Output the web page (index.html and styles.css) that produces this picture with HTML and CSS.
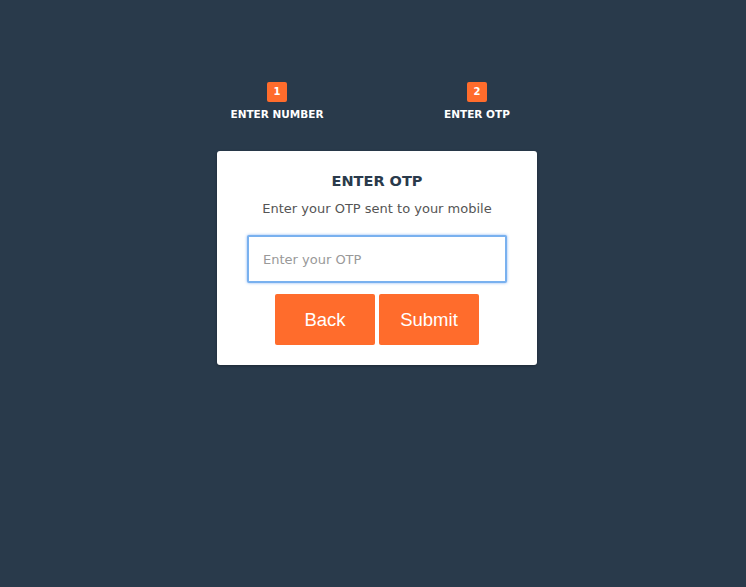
FILE: index.html
```html
<!DOCTYPE html>
<html>
<head>
<meta charset="utf-8">
<link rel="stylesheet" href="styles.css">
</head>
<body>
<div class="page">
  <div class="steps">
    <div class="step">
      <span class="badge">1</span>
      <span class="step-label">ENTER NUMBER</span>
    </div>
    <div class="step">
      <span class="badge">2</span>
      <span class="step-label">ENTER OTP</span>
    </div>
  </div>
  <div class="card">
    <h2 class="title">ENTER OTP</h2>
    <p class="subtitle">Enter your OTP sent to your mobile</p>
    <input class="otp-input" type="text" placeholder="Enter your OTP">
    <div class="actions">
      <button class="btn">Back</button>
      <button class="btn">Submit</button>
    </div>
  </div>
</div>
</body>
</html>
```

FILE: styles.css
```css
html, body {
  margin: 0;
  padding: 0;
  height: 100%;
}
body {
  background: #293a4b;
  font-family: "DejaVu Sans", "Open Sans", sans-serif;
}
.page {
  display: flex;
  flex-direction: column;
  align-items: center;
  padding-top: 82px;
  padding-left: 8px;
}
.steps {
  display: flex;
  width: 400px;
}
.step {
  width: 200px;
  display: flex;
  flex-direction: column;
  align-items: center;
}
.badge {
  width: 20px;
  height: 20px;
  border-radius: 2px;
  background: #ff6c2c;
  color: #fff;
  font-size: 10px;
  font-weight: bold;
  line-height: 20px;
  text-align: center;
}
.step-label {
  margin-top: 6px;
  color: #fff;
  font-size: 10.5px;
  font-weight: bold;
  line-height: 13px;
}
.card {
  margin-top: 30px;
  width: 320px;
  height: 214px;
  box-sizing: border-box;
  background: #fff;
  border-radius: 3px;
  display: flex;
  flex-direction: column;
  align-items: center;
  padding-top: 21px;
  box-shadow: 0 1px 3px rgba(0,0,0,0.3);
}
.title {
  margin: 0;
  font-size: 14.5px;
  font-weight: 600;
  color: #2a3a4b;
  line-height: 18px;
}
.subtitle {
  margin: 11px 0 0;
  font-size: 13px;
  color: #555;
  line-height: 16px;
}
.otp-input {
  margin-top: 18px;
  width: 260px;
  height: 48px;
  box-sizing: border-box;
  border: 2px solid #79b1ef;
  border-radius: 2px;
  box-shadow: 0 0 3px rgba(102,160,240,0.8);
  padding: 0 14px;
  font-family: inherit;
  font-size: 13px;
  outline: none;
}
.otp-input::placeholder {
  color: #999;
}
.actions {
  margin-top: 11px;
  display: flex;
  gap: 4px;
}
.btn {
  width: 100px;
  height: 51px;
  border: none;
  border-radius: 2px;
  background: #ff6c2c;
  color: #fff;
  font-family: "Liberation Sans", Arial, sans-serif;
  font-size: 18.5px;
  padding: 0;
}
```
